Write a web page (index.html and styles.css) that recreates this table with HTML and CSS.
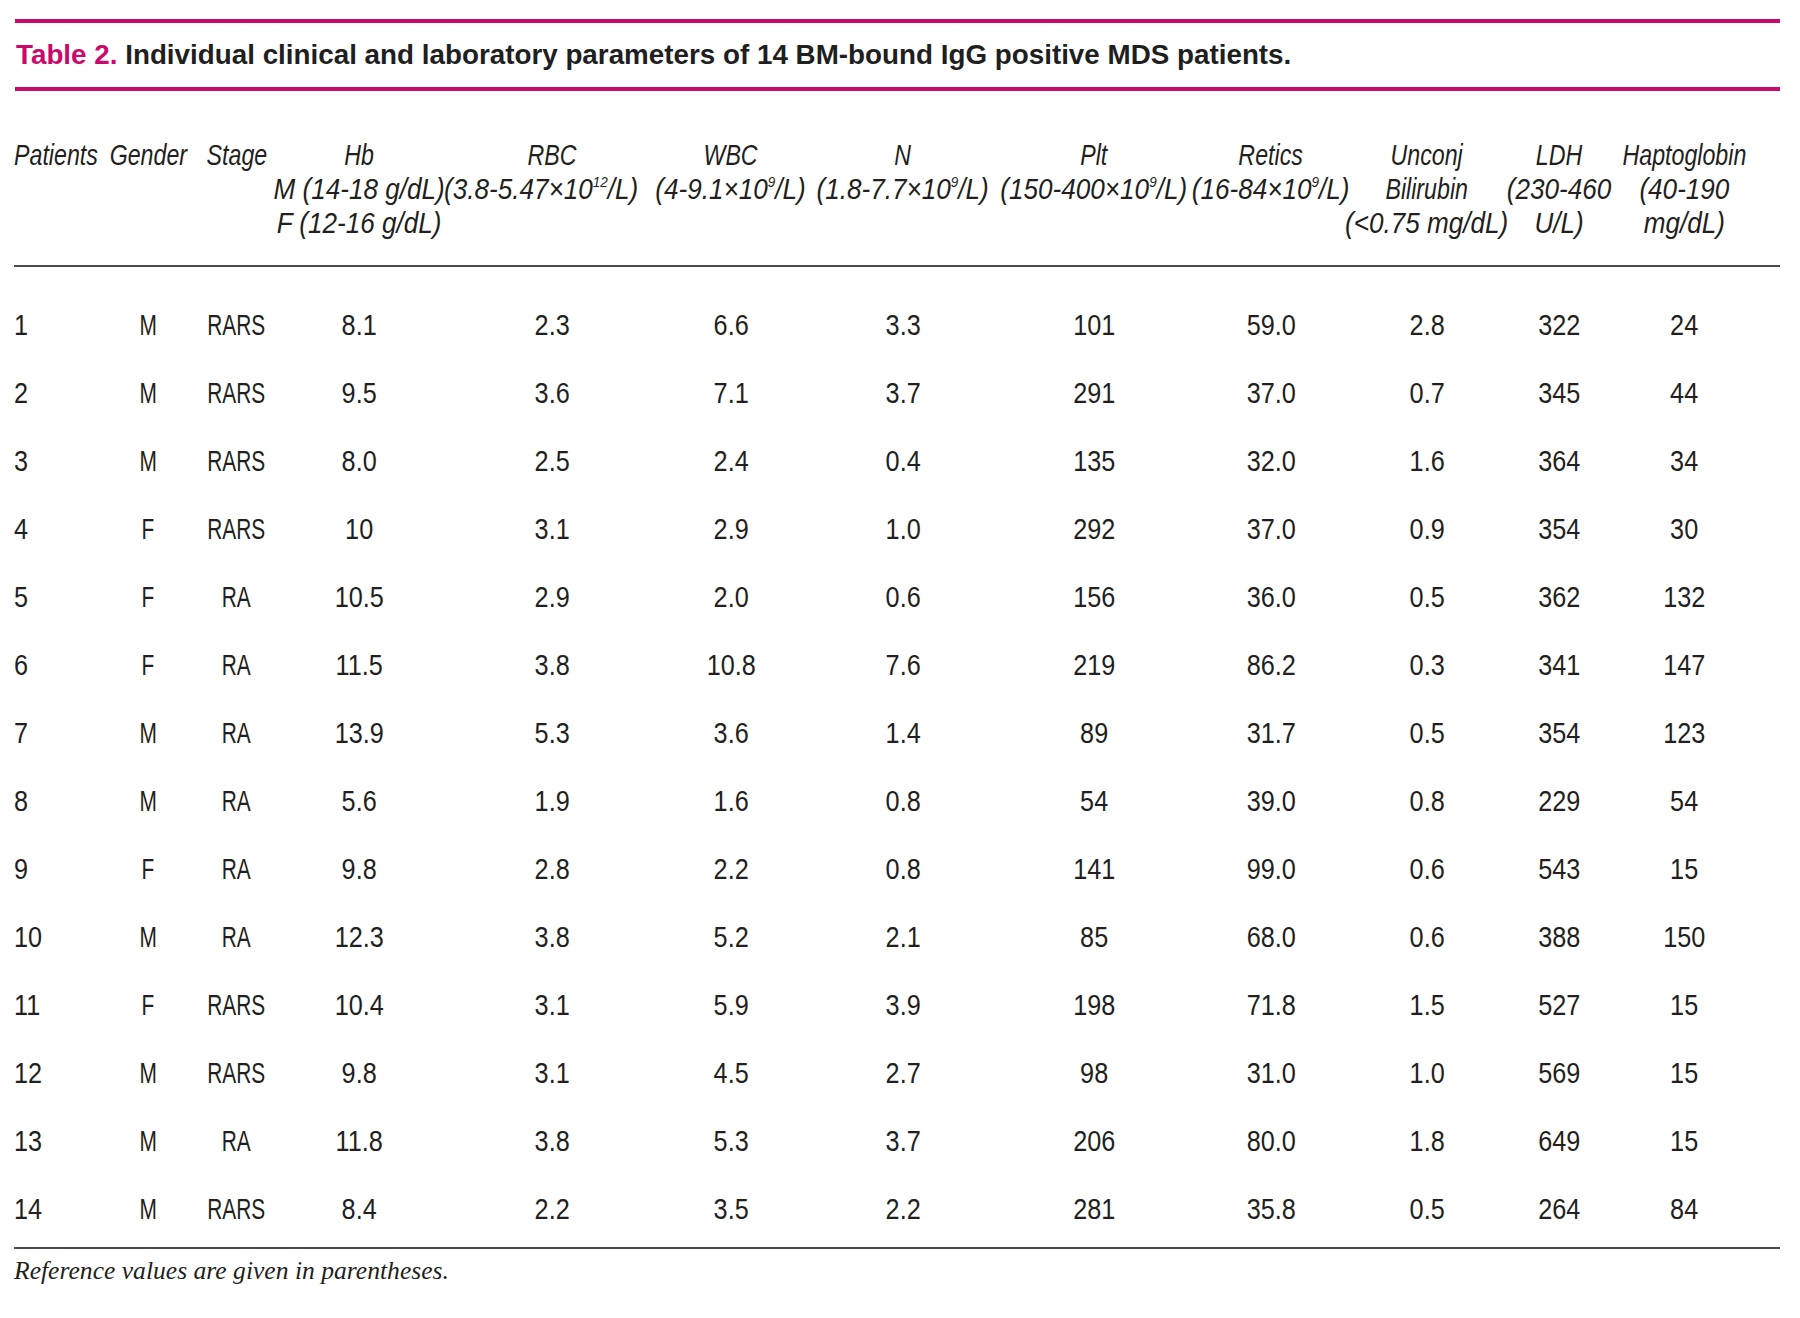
FILE: index.html
```html
<!DOCTYPE html>
<html lang="en">
<head>
<meta charset="utf-8">
<title>Table 2</title>
<link rel="stylesheet" href="styles.css">
</head>
<body>
<div class="page">
  <div class="rule rule-top"></div>
  <h1 class="title"><span class="label">Table 2.</span> Individual clinical and laboratory parameters of 14 BM-bound IgG positive MDS patients.</h1>
  <div class="rule rule-mid"></div>

  <div class="grid thead">
    <div class="c first"><span class="w">Patients</span></div>
    <div class="c"><span class="w">Gender</span></div>
    <div class="c"><span class="w">Stage</span></div>
    <div class="c"><span class="w">Hb</span><span class="n">M (14-18 g/dL)</span><span class="n">F (12-16 g/dL)</span></div>
    <div class="c"><span class="w">RBC</span><span class="n shift">(3.8-5.47×10<sup>12</sup>/L)</span></div>
    <div class="c"><span class="w">WBC</span><span class="n">(4-9.1×10<sup>9</sup>/L)</span></div>
    <div class="c"><span class="w">N</span><span class="n">(1.8-7.7×10<sup>9</sup>/L)</span></div>
    <div class="c"><span class="w">Plt</span><span class="n">(150-400×10<sup>9</sup>/L)</span></div>
    <div class="c"><span class="w">Retics</span><span class="n">(16-84×10<sup>9</sup>/L)</span></div>
    <div class="c"><span class="w">Unconj</span><span class="w">Bilirubin</span><span class="n">(&lt;0.75 mg/dL)</span></div>
    <div class="c"><span class="w">LDH</span><span class="n">(230-460</span><span class="n">U/L)</span></div>
    <div class="c"><span class="w">Haptoglobin</span><span class="n">(40-190</span><span class="n">mg/dL)</span></div>
  </div>

  <div class="tbody">
    <div class="grid row"><div class="c first">1</div><div class="c t">M</div><div class="c t">RARS</div><div class="c">8.1</div><div class="c">2.3</div><div class="c">6.6</div><div class="c">3.3</div><div class="c">101</div><div class="c">59.0</div><div class="c">2.8</div><div class="c">322</div><div class="c">24</div></div>
    <div class="grid row"><div class="c first">2</div><div class="c t">M</div><div class="c t">RARS</div><div class="c">9.5</div><div class="c">3.6</div><div class="c">7.1</div><div class="c">3.7</div><div class="c">291</div><div class="c">37.0</div><div class="c">0.7</div><div class="c">345</div><div class="c">44</div></div>
    <div class="grid row"><div class="c first">3</div><div class="c t">M</div><div class="c t">RARS</div><div class="c">8.0</div><div class="c">2.5</div><div class="c">2.4</div><div class="c">0.4</div><div class="c">135</div><div class="c">32.0</div><div class="c">1.6</div><div class="c">364</div><div class="c">34</div></div>
    <div class="grid row"><div class="c first">4</div><div class="c t">F</div><div class="c t">RARS</div><div class="c">10</div><div class="c">3.1</div><div class="c">2.9</div><div class="c">1.0</div><div class="c">292</div><div class="c">37.0</div><div class="c">0.9</div><div class="c">354</div><div class="c">30</div></div>
    <div class="grid row"><div class="c first">5</div><div class="c t">F</div><div class="c t">RA</div><div class="c">10.5</div><div class="c">2.9</div><div class="c">2.0</div><div class="c">0.6</div><div class="c">156</div><div class="c">36.0</div><div class="c">0.5</div><div class="c">362</div><div class="c">132</div></div>
    <div class="grid row"><div class="c first">6</div><div class="c t">F</div><div class="c t">RA</div><div class="c">11.5</div><div class="c">3.8</div><div class="c">10.8</div><div class="c">7.6</div><div class="c">219</div><div class="c">86.2</div><div class="c">0.3</div><div class="c">341</div><div class="c">147</div></div>
    <div class="grid row"><div class="c first">7</div><div class="c t">M</div><div class="c t">RA</div><div class="c">13.9</div><div class="c">5.3</div><div class="c">3.6</div><div class="c">1.4</div><div class="c">89</div><div class="c">31.7</div><div class="c">0.5</div><div class="c">354</div><div class="c">123</div></div>
    <div class="grid row"><div class="c first">8</div><div class="c t">M</div><div class="c t">RA</div><div class="c">5.6</div><div class="c">1.9</div><div class="c">1.6</div><div class="c">0.8</div><div class="c">54</div><div class="c">39.0</div><div class="c">0.8</div><div class="c">229</div><div class="c">54</div></div>
    <div class="grid row"><div class="c first">9</div><div class="c t">F</div><div class="c t">RA</div><div class="c">9.8</div><div class="c">2.8</div><div class="c">2.2</div><div class="c">0.8</div><div class="c">141</div><div class="c">99.0</div><div class="c">0.6</div><div class="c">543</div><div class="c">15</div></div>
    <div class="grid row"><div class="c first">10</div><div class="c t">M</div><div class="c t">RA</div><div class="c">12.3</div><div class="c">3.8</div><div class="c">5.2</div><div class="c">2.1</div><div class="c">85</div><div class="c">68.0</div><div class="c">0.6</div><div class="c">388</div><div class="c">150</div></div>
    <div class="grid row"><div class="c first">11</div><div class="c t">F</div><div class="c t">RARS</div><div class="c">10.4</div><div class="c">3.1</div><div class="c">5.9</div><div class="c">3.9</div><div class="c">198</div><div class="c">71.8</div><div class="c">1.5</div><div class="c">527</div><div class="c">15</div></div>
    <div class="grid row"><div class="c first">12</div><div class="c t">M</div><div class="c t">RARS</div><div class="c">9.8</div><div class="c">3.1</div><div class="c">4.5</div><div class="c">2.7</div><div class="c">98</div><div class="c">31.0</div><div class="c">1.0</div><div class="c">569</div><div class="c">15</div></div>
    <div class="grid row"><div class="c first">13</div><div class="c t">M</div><div class="c t">RA</div><div class="c">11.8</div><div class="c">3.8</div><div class="c">5.3</div><div class="c">3.7</div><div class="c">206</div><div class="c">80.0</div><div class="c">1.8</div><div class="c">649</div><div class="c">15</div></div>
    <div class="grid row"><div class="c first">14</div><div class="c t">M</div><div class="c t">RARS</div><div class="c">8.4</div><div class="c">2.2</div><div class="c">3.5</div><div class="c">2.2</div><div class="c">281</div><div class="c">35.8</div><div class="c">0.5</div><div class="c">264</div><div class="c">84</div></div>
  </div>

  <p class="note">Reference values are given in parentheses.</p>
</div>
</body>
</html>
```

FILE: styles.css
```css
html, body {
  margin: 0;
  padding: 0;
  background: #ffffff;
}

.page {
  width: 1766px;
  padding: 19px 0 0 14px;
  color: #231f20;
}

.rule {
  height: 4px;
  background: #c90a6c;
  margin-left: 1px;
}

.title {
  margin: 0 0 0 2px;
  height: 64px;
  line-height: 64px;
  font-family: "Liberation Sans", Arial, sans-serif;
  font-size: 27.8px;
  font-weight: bold;
  color: #1f1f1f;
  white-space: nowrap;
}

.title .label {
  color: #c90a6c;
}

.grid {
  display: grid;
  grid-template-columns: 91px 86px 91px 154px 232px 126px 218px 164px 190px 122px 142px 108px;
  font-family: "Liberation Sans", Arial, sans-serif;
  font-size: 29px;
  color: #231f20;
}

.c {
  justify-self: center;
  text-align: center;
  white-space: nowrap;
}

.c.first {
  justify-self: start;
  text-align: left;
}

/* header: condensed look via horizontal scaling */
.thead {
  font-style: italic;
  line-height: 34px;
  padding: 47px 0 25px;
  border-bottom: 2px solid #4a4a4a;
}

.thead .w,
.thead .n {
  display: block;
  transform-origin: center;
}

.thead .w {
  transform: scaleX(0.8);
}

.thead .n {
  transform: scaleX(0.9);
}

.thead .n.shift {
  padding-right: 24px;
}

.thead .first .w {
  transform-origin: left center;
}

.thead sup {
  font-size: 15px;
  line-height: 0;
  vertical-align: 12px;
}

.tbody {
  padding: 24px 0 4px;
  border-bottom: 2px solid #4a4a4a;
  margin-bottom: 7px;
}

.row {
  line-height: 68px;
}

.row .c {
  transform: scaleX(0.87);
}

.row .c.t {
  transform: scaleX(0.72);
}

.row .c.first {
  transform-origin: left center;
}

.note {
  margin: 0;
  font-family: "Liberation Serif", "Times New Roman", serif;
  font-style: italic;
  font-size: 25.6px;
  line-height: 30px;
  color: #231f20;
}
```
